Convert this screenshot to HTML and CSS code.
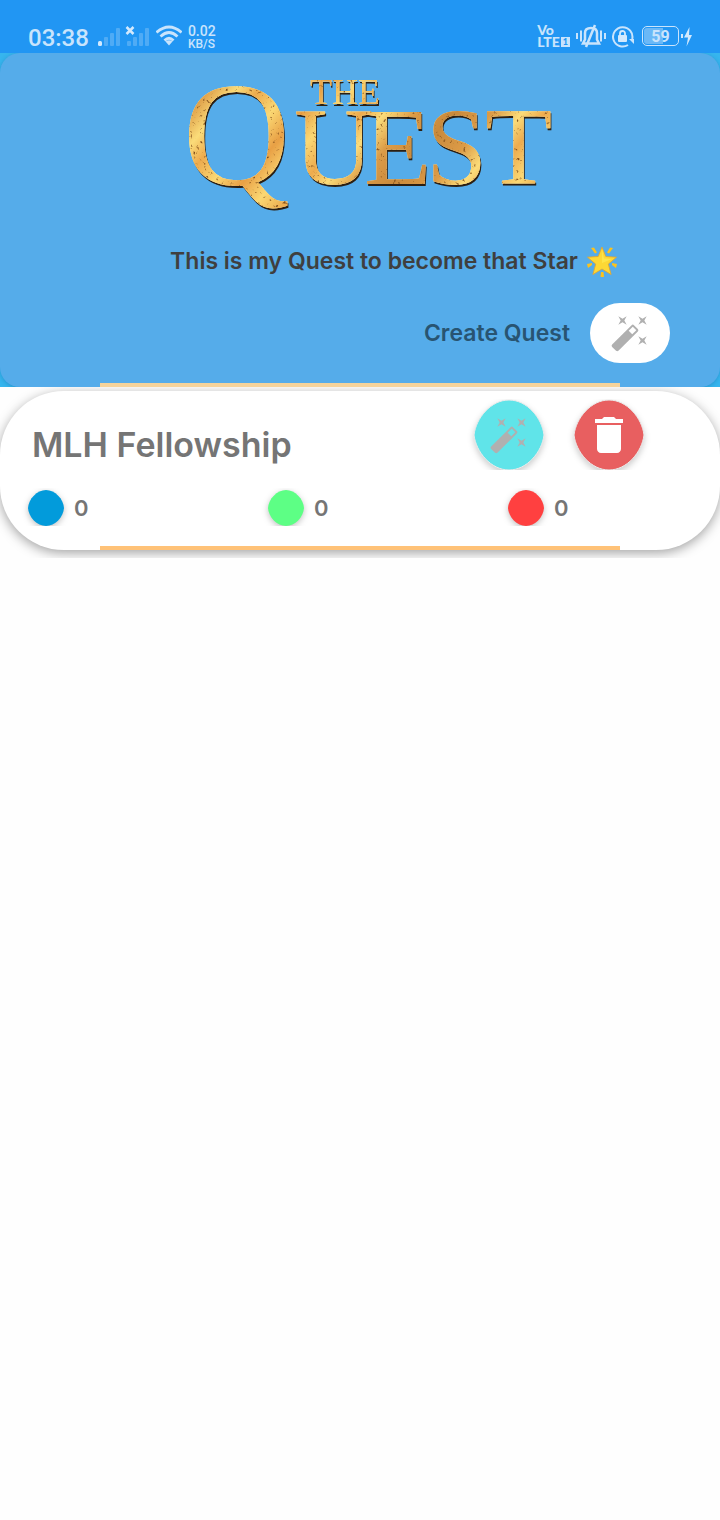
FILE: index.html
```html
<!DOCTYPE html>
<html lang="en">
<head>
<meta charset="utf-8">
<meta name="viewport" content="width=device-width, initial-scale=1">
<title>The Quest</title>
<link rel="stylesheet" href="styles.css">
</head>
<body>
<div class="status">
  <div class="status-group">
    <span class="clock">03:38</span>
    <svg width="52" height="24" viewBox="0 0 52 24" aria-hidden="true">
      <rect x="0" y="17" width="4" height="5" rx="1.5" fill="#d3e9fd"/>
      <g fill="#4fabf5">
        <rect x="6" y="13" width="4" height="9" rx="1"/><rect x="12" y="9" width="4" height="13" rx="1"/><rect x="18" y="4" width="4" height="18" rx="1"/>
        <rect x="29" y="17" width="4" height="5" rx="1"/><rect x="35" y="13" width="4" height="9" rx="1"/><rect x="41" y="9" width="4" height="13" rx="1"/><rect x="47" y="4" width="4" height="18" rx="1"/>
      </g>
      <path d="M28.5 3l7 7m0-7l-7 7" stroke="#d3e9fd" stroke-width="2.5"/>
    </svg>
    <svg width="26" height="24" viewBox="1 0 26 24" aria-hidden="true" fill="none" stroke="#c9e4fc" stroke-width="2.8">
      <path d="M1.500 8.500Q14-2.500 26.500 8.500M5.500 12.500Q14 4.500 22.500 12.500M9.500 16.500Q14 12 18.500 16.500"/>
      <path d="M10.500 17.500Q14 15 17.500 17.500L14 21.500z" fill="#c9e4fc" stroke="none"/>
    </svg>
    <span class="speed"><span>0.02</span><span>KB/S</span></span>
  </div>
  <div class="status-group">
    <span class="volte"><span>Vo</span><span>LTE<b>1</b></span></span>
    <svg width="30" height="24" viewBox="0 0 30 24" aria-hidden="true" fill="none" stroke="#c9e4fc" stroke-width="2">
      <path d="M1 9v6M5 6.500v11M25 6.500v11M29 9v6"/>
      <path stroke-width="2.500" d="M7 19.500h16l-2-4V9c0-3-2-5-6-5s-6 2-6 5v6.500zM10 23L19 1"/>
    </svg>
    <svg width="22" height="24" viewBox="0 0 22 24" aria-hidden="true">
      <path d="M20.200 15A9.700 9.700 0 1 0 16 21" fill="none" stroke="#c9e4fc" stroke-width="2"/>
      <path d="M17 15l5 0v5z" fill="#c9e4fc"/>
      <rect x="6" y="11" width="9" height="7" rx="1" fill="#d3e9fd"/>
      <path d="M8 12V9.500a2.500 2.500 0 0 1 5 0V12" fill="none" stroke="#d3e9fd" stroke-width="1.800"/>
    </svg>
    <span class="battery">
      <span class="battery-level">59</span>
      <svg width="11" height="24" viewBox="0 0 11 24" aria-hidden="true" fill="#d3e9fd"><path d="M0 10h2v4H0zM8.500 3L3 13.500h4l-1.500 9L11 11H8z"/></svg>
    </span>
  </div>
</div>

<header class="hero-wrap">
  <div class="hero">
    <svg class="logo" width="380" height="130" viewBox="0 0 380 130" role="img" aria-label="The Quest">
      <defs>
        <linearGradient id="gold" gradientUnits="userSpaceOnUse" x1="0" y1="0" x2="90" y2="75" spreadMethod="reflect">
          <stop offset="0" stop-color="#c98a3c"/><stop offset=".25" stop-color="#dc9b46"/><stop offset=".45" stop-color="#fbdc79"/>
          <stop offset=".6" stop-color="#edab4e"/><stop offset=".8" stop-color="#fbd873"/><stop offset="1" stop-color="#e8a045"/>
        </linearGradient>
        <filter id="metal" x="-5%" y="-10%" width="112%" height="125%" color-interpolation-filters="sRGB">
          <feTurbulence type="fractalNoise" baseFrequency=".3" numOctaves="3" seed="8" result="noise"/>
          <feColorMatrix in="noise" values="0 0 0 0 .5  0 0 0 0 .3  0 0 0 0 .1  3 3 0 0 -3.600" result="specks"/>
          <feComposite in="specks" in2="SourceAlpha" operator="in" result="grain"/>
          <feOffset in="SourceAlpha" dx="1" dy="1.500" result="low"/>
          <feFlood flood-color="#2c1f12"/><feComposite in2="low" operator="in" result="edge"/>
          <feOffset in="SourceAlpha" dx="-.5" dy="-.5" result="high"/>
          <feFlood flood-color="#fff1bd"/><feComposite in2="high" operator="in" result="shine"/>
          <feMerge><feMergeNode in="edge"/><feMergeNode in="shine"/><feMergeNode in="SourceGraphic"/><feMergeNode in="grain"/></feMerge>
        </filter>
      </defs>
      <g class="logo-type" fill="url(#gold)" filter="url(#metal)">
        <text class="logo-small" x="130" y="29">THE</text>
        <text class="logo-large"><tspan class="logo-cap" x="3" y="110">Q</tspan><tspan x="114" y="109">U</tspan><tspan x="184">E</tspan><tspan x="246">S</tspan><tspan x="305">T</tspan></text>
      </g>
    </svg>
    <h1 class="tagline">This is my Quest to become that Star
      <svg width="32" height="34" viewBox="0 0 32 34" aria-hidden="true">
        <g fill="#fcc21b"><path d="M5 4l3-.5 3 5-2 1zM27 4l-3-.5-3 5 2 1zM1 20l5-1 0 2-4 3zM31 20l-5-1 0 2 4 3zM15 28h2.500l.5 5h-3.500z"/></g>
        <path d="M16 3l3.800 9.500 10.700.7-8.200 6.900 2.800 10.400L16 25l-9.100 5.500 2.800-10.400L1.500 13.200l10.700-.7z" fill="#fdd835" stroke="#e5a52c" stroke-width=".8"/>
        <path d="M16 6l2 8.500 8 .5-10 4z" fill="#ffee58" opacity=".6"/>
      </svg>
    </h1>
    <div class="create-row">
      <label for="create">Create Quest</label>
      <button class="create" id="create" type="button">
        <svg width="40" height="40" viewBox="0 0 24 24" aria-hidden="true" fill="#b0b0b0"><path id="wand" d="M7.500 5.600L10 7 8.600 4.500 10 2 7.500 3.400 5 2l1.400 2.500L5 7zm12 9.800L17 14l1.400 2.500L17 19l2.500-1.400L22 19l-1.400-2.500L22 14zM22 2l-2.500 1.400L17 2l1.400 2.500L17 7l2.500-1.400L22 7l-1.400-2.500zm-7.630 5.290a.996.996 0 0 0-1.410 0L1.290 18.960a.996.996 0 0 0 0 1.410l2.340 2.340c.39.39 1.020.39 1.410 0L16.700 11.050a.996.996 0 0 0 0-1.410zm-1.030 5.490l-2.120-2.120 2.440-2.440 2.120 2.120z"/></svg>
      </button>
    </div>
    <div class="rule"></div>
  </div>
</header>

<main class="list">
  <article class="card">
    <div class="card-head">
      <h2>MLH Fellowship</h2>
      <button class="round" type="button" aria-label="Edit quest">
        <svg class="blob" viewBox="0 0 70 70" aria-hidden="true"><path fill="#60e4e9" stroke="#ebebeb" d="M0 35C2 18 17 0 35 0S68 18 70 35C68 52 53 70 35 70S2 52 0 35z"/><svg x="15" y="15" width="40" height="40" viewBox="0 0 24 24" fill="#b0b0b0"><use href="#wand"/></svg></svg>
      </button>
      <button class="round" type="button" aria-label="Delete quest">
        <svg class="blob" viewBox="0 0 70 70" aria-hidden="true"><path fill="#e85f60" stroke="#ebebeb" d="M0 35C2 18 17 0 35 0S68 18 70 35C68 52 53 70 35 70S2 52 0 35z"/><svg x="11" y="11" width="48" height="48" viewBox="0 0 24 24" fill="#fff"><path d="M6 19c0 1.100.9 2 2 2h8c1.100 0 2-.9 2-2V7H6zM19 4h-3.500l-1-1h-5l-1 1H5v2h14z"/></svg></svg>
      </button>
    </div>
    <ul class="counts">
      <li><svg class="dot blue" viewBox="0 0 36 36" aria-hidden="true"><path d="M0 18C.5 9 9 0 18 0S35.500 9 36 18C35.500 27 27 36 18 36S.5 27 0 18z"/></svg>0</li>
      <li><svg class="dot green" viewBox="0 0 36 36" aria-hidden="true"><path d="M0 18C.5 9 9 0 18 0S35.500 9 36 18C35.500 27 27 36 18 36S.5 27 0 18z"/></svg>0</li>
      <li><svg class="dot red" viewBox="0 0 36 36" aria-hidden="true"><path d="M0 18C.5 9 9 0 18 0S35.500 9 36 18C35.500 27 27 36 18 36S.5 27 0 18z"/></svg>0</li>
    </ul>
    <div class="rule rule-card"></div>
  </article>
</main>
</body>
</html>
```
FILE: styles.css
```css
* { box-sizing: border-box; }
body {
  margin: 0;
  background: #fefefe;
  font-family: Inter, "Open Sans", sans-serif;
  font-weight: 600;
}
h1, h2, ul { margin: 0; padding: 0; font-size: inherit; font-weight: 600; }
svg { display: block; flex: none; }
button { border: 0; padding: 0; cursor: pointer; }

.status {
  display: flex;
  justify-content: space-between;
  padding: 24px 28px 5px;
  background: #2196f3;
  color: #c9e4fc;
  font-family: Roboto, sans-serif;
  font-weight: 500;
}
.status-group { display: flex; align-items: center; gap: 6px; height: 24px; }
.clock { padding: 4px 3px 0 0; font-size: 24px; line-height: 28px; }
.speed, .volte { display: flex; flex-direction: column; }
.speed { padding-top: 2px; font-size: 14px; line-height: 13px; }
.speed span + span { font-size: 12px; line-height: 12px; }
.volte { font-family: Lato, sans-serif; font-weight: 900; font-size: 14px; line-height: 12px; }
.volte span + span { display: flex; align-items: center; gap: 1px; }
.volte b { padding: 0 2px; background: #c9e4fc; color: #2196f3; font-size: 9px; line-height: 10px; }
.battery { display: flex; align-items: center; gap: 2px; margin-left: 2px; }
.battery-level {
  width: 37px;
  height: 20px;
  padding: 1px;
  border: 1px solid #c9e4fc;
  border-radius: 5px;
  background: linear-gradient(90deg, #6ab8f7 59%, #2196f3 59%) content-box;
  font-size: 16px;
  font-weight: 700;
  line-height: 17px;
  text-align: center;
}

.hero-wrap { background: #36b5ee; overflow: hidden; }
.hero {
  display: flex;
  flex-direction: column;
  padding-top: 22px;
  border-radius: 20px;
  background: #55acea;
  box-shadow: 0 1px 4px rgba(0, 60, 120, .25);
}
.logo { align-self: center; margin-left: 20px; overflow: visible; }
.logo-type { font-family: "Liberation Serif", serif; font-weight: 400; }
.logo-small { font-size: 36px; }
.logo-large { font-size: 110px; }
.logo-cap { font-size: 148px; }
.tagline {
  display: flex;
  align-items: center;
  justify-content: flex-end;
  gap: 8px;
  margin-top: 36px;
  padding-right: 102px;
  color: #3f3f3f;
  font-size: 23px;
  line-height: 40px;
}
.create-row {
  display: flex;
  align-items: center;
  justify-content: flex-end;
  gap: 20px;
  margin: 22px 50px 20px;
  color: #285472;
  font-size: 23px;
}
.create {
  display: grid;
  place-items: center;
  width: 80px;
  height: 60px;
  border-radius: 30px;
  background: #fff;
}
.rule { height: 4px; margin: 0 100px; background: #f5d39b; }
.rule-card { background: #ffc277; }

.list { padding: 4px 0 8px; overflow: hidden; }
.card {
  border-radius: 64px;
  background: #fff;
  box-shadow: 0 3px 12px rgba(0, 0, 0, .36);
  color: #757575;
}
.card-head { display: flex; gap: 30px; padding: 9px 76px 0 32px; }
.card-head h2 { flex: 1; height: 70px; font-size: 34px; line-height: 90px; white-space: nowrap; }
.round { width: 70px; height: 70px; background: none; clip-path: inset(-1px -12px 0 -12px); }
.blob { width: 70px; height: 70px; overflow: visible; filter: drop-shadow(0 3px 3px rgba(0, 0, 0, .2)); }
.counts { display: grid; grid-template-columns: repeat(3, 1fr); padding: 20px 0; list-style: none; font-size: 22px; }
.counts li { display: flex; align-items: center; gap: 10px; height: 36px; padding-left: 28px; clip-path: inset(-2px 0 0 0); }
.dot { width: 36px; height: 36px; overflow: visible; filter: drop-shadow(0 2px 3px rgba(0, 0, 0, .25)); }
.blue { fill: #029bdb; }
.green { fill: #5dff85; }
.red { fill: #ff4040; }
```
